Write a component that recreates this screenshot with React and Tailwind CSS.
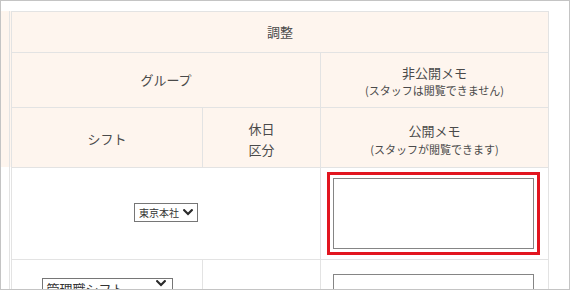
import React from 'react';

const peach = 'bg-[#fef5ee]';
const line = 'border-[#e3e3e3]';

const Chevron = ({ className }) => (
  <svg width="10" height="7" viewBox="0 0 10 7" className={className}>
    <path d="M1.2 1.2 L5 5 L8.8 1.2" fill="none" stroke="#2b2b2b" strokeWidth="2.2" strokeLinecap="square" />
  </svg>
);

const FakeSelect = ({ label, className, textClass }) => (
  <div className={`flex items-center justify-between border border-[#767676] bg-white ${className}`}>
    <span className={`text-[#333] ${textClass}`}>{label}</span>
    <Chevron />
  </div>
);

export default function App() {
  return (
    <div
      className="w-[570px] h-[290px] border border-[#c4c4c4] bg-white overflow-hidden"
      style={{ fontFamily: '"Noto Sans CJK JP", "Noto Sans", sans-serif' }}
    >
      <div className="flex pt-[10px]">
        {/* clipped column at the left edge */}
        <div className="flex">
          <div className="w-[8px] flex flex-col">
            <div className={`h-[156px] ${peach}`} />
          </div>
          <div className="w-px h-[300px] bg-[#e3e3e3]" />
          <div className="w-px flex flex-col">
            <div className={`h-[156px] ${peach}`} />
          </div>
        </div>

        <div className={`w-[538px] border-l border-t ${line} text-[#4a4a4a]`}>
          {/* header row 1 */}
          <div className={`h-[41px] border-b border-r ${line} ${peach} flex items-center justify-center text-[13px]`}>
            調整
          </div>

          {/* header row 2 */}
          <div className="flex h-[55px]">
            <div className={`w-[309px] border-b border-r ${line} ${peach} flex items-center justify-center text-[13px]`}>
              グループ
            </div>
            <div className={`w-[228px] border-b border-r ${line} ${peach} flex flex-col items-center justify-center pt-[3px]`}>
              <span className="text-[13px] leading-[18px]">非公開メモ</span>
              <span className="text-[11px] leading-[17px]">(スタッフは閲覧できません)</span>
            </div>
          </div>

          {/* header row 3 */}
          <div className="flex h-[60px]">
            <div className={`w-[191px] border-b border-r ${line} ${peach} flex items-center justify-center text-[13px] pt-[2px]`}>
              シフト
            </div>
            <div className={`w-[118px] border-b border-r ${line} ${peach} flex flex-col items-center justify-center text-[13px] leading-[21px] pt-[2px]`}>
              <span>休日</span>
              <span>区分</span>
            </div>
            <div className={`w-[228px] border-b border-r ${line} ${peach} flex flex-col items-center justify-center pt-[4px]`}>
              <span className="text-[13px] leading-[18px]">公開メモ</span>
              <span className="text-[11px] leading-[18px]">(スタッフが閲覧できます)</span>
            </div>
          </div>

          {/* body row 1 */}
          <div className="flex h-[92px]">
            <div className={`w-[309px] border-b border-r ${line} flex items-center justify-center pb-[2px]`}>
              <FakeSelect label="東京本社" className="w-[64px] h-[19px] pl-[4px] pr-[4px]" textClass="text-[10px]" />
            </div>
            <div className={`w-[228px] border-b border-r ${line} pl-[6px] pt-[4px]`}>
              <div className="w-[213px] h-[83px] border-[3px] border-[#e2151f] p-[3px]">
                <div className="w-full h-full border border-[#858585] bg-white" />
              </div>
            </div>
          </div>

          {/* body row 2 */}
          <div className="flex h-[100px]">
            <div className={`w-[191px] border-r ${line} flex justify-center pt-[18px]`}>
              <FakeSelect label="管理職シフト" className="w-[131px] h-[22px] pl-[4px] pr-[6px] items-start pt-[1px]" textClass="text-[13px] leading-[18px]" />
            </div>
            <div className={`w-[118px] border-r ${line}`} />
            <div className={`w-[228px] border-r ${line} pl-[12px] pt-[14px]`}>
              <div className="w-[201px] h-[71px] border border-[#858585] bg-white" />
            </div>
          </div>
        </div>
      </div>
    </div>
  );
}
